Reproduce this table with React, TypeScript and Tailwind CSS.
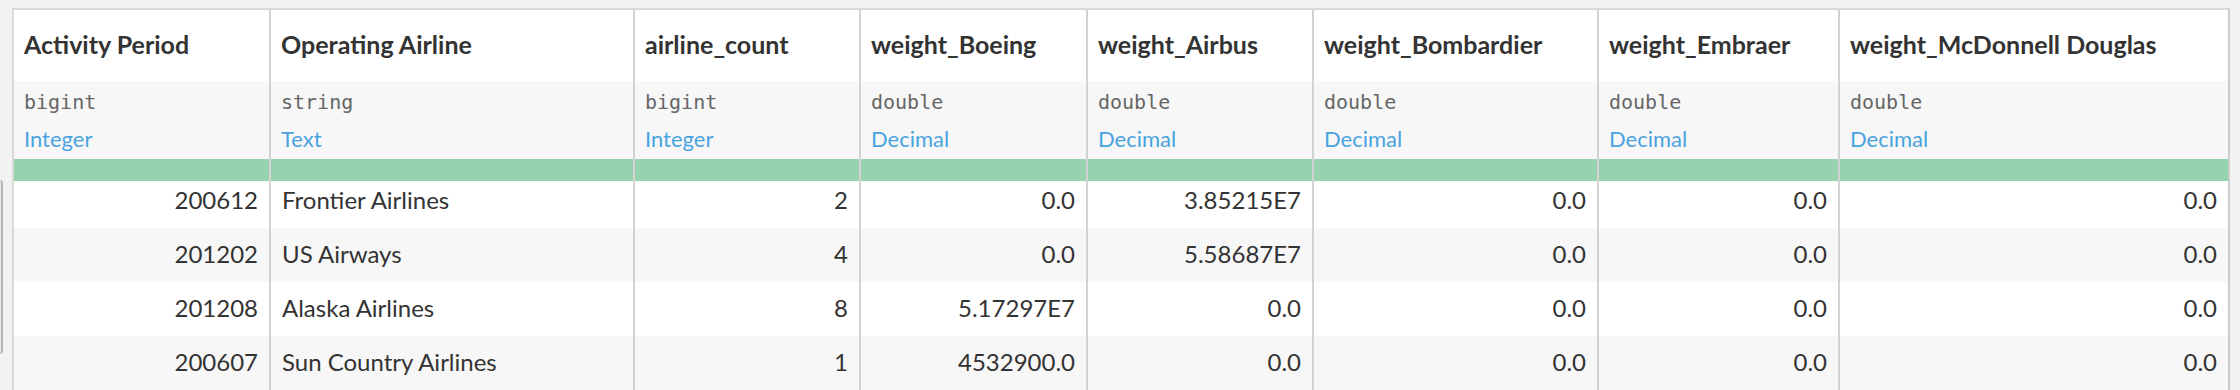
import React from 'react';

type Column = {
    name: string;
    storage: string;
    meaning: string;
    width: string;
    align: 'left' | 'right';
    values: string[];
};

const columns: Column[] = [
    { name: 'Activity Period', storage: 'bigint', meaning: 'Integer', width: 'w-[257px]', align: 'right', values: ['200612', '201202', '201208', '200607'] },
    { name: 'Operating Airline', storage: 'string', meaning: 'Text', width: 'w-[364px]', align: 'left', values: ['Frontier Airlines', 'US Airways', 'Alaska Airlines', 'Sun Country Airlines'] },
    { name: 'airline_count', storage: 'bigint', meaning: 'Integer', width: 'w-[226px]', align: 'right', values: ['2', '4', '8', '1'] },
    { name: 'weight_Boeing', storage: 'double', meaning: 'Decimal', width: 'w-[227px]', align: 'right', values: ['0.0', '0.0', '5.17297E7', '4532900.0'] },
    { name: 'weight_Airbus', storage: 'double', meaning: 'Decimal', width: 'w-[226px]', align: 'right', values: ['3.85215E7', '5.58687E7', '0.0', '0.0'] },
    { name: 'weight_Bombardier', storage: 'double', meaning: 'Decimal', width: 'w-[285px]', align: 'right', values: ['0.0', '0.0', '0.0', '0.0'] },
    { name: 'weight_Embraer', storage: 'double', meaning: 'Decimal', width: 'w-[241px]', align: 'right', values: ['0.0', '0.0', '0.0', '0.0'] },
    { name: 'weight_McDonnell Douglas', storage: 'double', meaning: 'Decimal', width: 'w-[388px]', align: 'right', values: ['0.0', '0.0', '0.0', '0.0'] },
];

// row heights, first row sits partly under the green bar
const rowClasses = [
    'h-[47px] pb-[9px] bg-white',
    'h-[54px] pb-[2px] bg-[#f7f7f7]',
    'h-[54px] pb-[2px] bg-white',
    'h-[54px] pb-[2px] bg-[#f7f7f7]',
];

const DataColumn = ({ column, last }: { column: Column; last: boolean }) => {
    return (
        <div className={`${column.width} shrink-0 flex flex-col ${last ? '' : 'border-r-2 border-[#d2d2d2]'}`}>
            {/* column name */}
            <div className="h-[71px] bg-white flex items-center pb-[2px] pl-[10px] font-[Lato,sans-serif] font-bold text-[25px] text-[#333] whitespace-nowrap">
                {column.name}
            </div>
            {/* storage type + meaning */}
            <div className="h-[78px] bg-[#f7f7f7] pl-[10px] flex flex-col">
                <div className="pt-[4px] h-[38px] flex items-center font-['DejaVu_Sans_Mono',monospace] text-[20px] text-[#666]">
                    {column.storage}
                </div>
                <div className="h-[38px] flex items-center font-[Lato,sans-serif] text-[22px] text-[#4aa3df]">
                    {column.meaning}
                </div>
            </div>
            {/* validity bar */}
            <div className="h-[22px] bg-[#94d3ae]" />
            {column.values.map((value, i) => (
                <div
                    key={i}
                    className={`${rowClasses[i]} flex items-center px-[11px] font-[Lato,sans-serif] text-[24px] text-[#333] whitespace-nowrap ${column.align === 'right' ? 'justify-end' : 'justify-start'}`}
                >
                    {value}
                </div>
            ))}
        </div>
    );
};

export default function App() {
    return (
        <div className="w-[2240px] h-[390px] overflow-hidden bg-[#f2f2f2] flex pt-[8px]">
            {/* edge of the panel on the left */}
            <div className="w-[12px] shrink-0">
                <div className="mt-[172px] w-[3px] h-[174px] bg-[#e6e6e6] border-r-2 border-[#b5b5b5] rounded-r-[4px]" />
            </div>

            <div className="flex border-t-2 border-l-2 border-r-2 border-[#d9d9d9] border-r-[#cccccc] bg-white">
                {columns.map((column, i) => (
                    <DataColumn key={column.name} column={column} last={i === columns.length - 1} />
                ))}
            </div>
        </div>
    );
}
